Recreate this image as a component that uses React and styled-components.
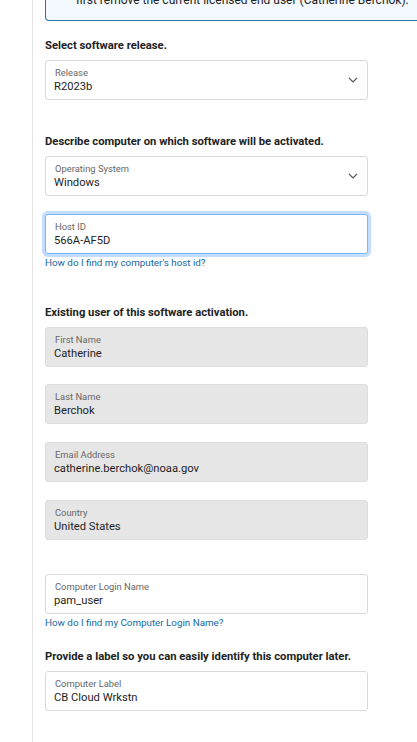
import React from "react";
import styled, { createGlobalStyle } from "styled-components";

const Global = createGlobalStyle`
  html, body { margin: 0; padding: 0; background: #fff; overflow: hidden; }
  body { font-family: Roboto, "Liberation Sans", Arial, sans-serif; color: #222; }
  * { box-sizing: border-box; }
`;

const Page = styled.div`
  display: flex;
  width: 417px;
  height: 742px;
  overflow: hidden;
`;

const Gutter = styled.div`
  flex: 0 0 33px;
  border-right: 1px solid #e6e6e6;
`;

const Main = styled.div`
  flex: 1;
  padding-left: 12px;
  min-width: 0;
`;

const Alert = styled.div`
  width: 400px;
  margin-top: -8px;
  padding: 0 12px 12px 30px;
  background: #f3f9ff;
  border: 1px solid #2a76a0;
  border-top: none;
  border-radius: 0 0 4px 4px;
  font-size: 12px;
  line-height: 16px;
  color: #222;
  white-space: nowrap;
`;

const Heading = styled.h3`
  margin: ${(p) => p.$top}px 0 0;
  font-size: 11.25px;
  font-weight: 700;
  line-height: 16px;
  color: #222;
  white-space: nowrap;
`;

const Field = styled.div`
  position: relative;
  width: 323px;
  height: 40px;
  margin-top: ${(p) => p.$top}px;
  padding: 6px 8px 0 8px;
  border-radius: 3px;
  border: 1px solid ${(p) => (p.$focus ? "#7db5f2" : p.$disabled ? "#dddddd" : "#d9d9d9")};
  background: ${(p) => (p.$disabled ? "#e6e6e6" : "#fff")};
  box-shadow: ${(p) => (p.$focus ? "0 0 0 3px #c2ddff" : "none")};
`;

const Label = styled.div`
  font-size: 9.4px;
  line-height: 12px;
  color: #666;
  padding-left: 1px;
  white-space: nowrap;
`;

const Value = styled.div`
  font-size: 11.2px;
  line-height: 15px;
  color: #1e1e1e;
  white-space: nowrap;
`;

const Chevron = styled.svg`
  position: absolute;
  right: 9px;
  top: 16px;
  width: 10px;
  height: 6px;
`;

const HelpLink = styled.a`
  display: block;
  margin-top: ${(p) => p.$top}px;
  font-size: 9.8px;
  line-height: 12px;
  color: #14689f;
  text-decoration: none;
  white-space: nowrap;
`;

function FormField({ label, value, top, select, disabled, focus }) {
  return (
    <Field $top={top} $disabled={disabled} $focus={focus}>
      <Label>{label}</Label>
      <Value>{value}</Value>
      {select && (
        <Chevron viewBox="0 0 10 6">
          <path d="M1 1 L5 5 L9 1" fill="none" stroke="#555" strokeWidth="1.1" />
        </Chevron>
      )}
    </Field>
  );
}

export default function App() {
  return (
    <>
      <Global />
      <Page>
        <Gutter />
        <Main>
          <Alert>first remove the current licensed end user (Catherine Berchok).</Alert>
          <Heading $top={17}>Select software release.</Heading>
          <FormField top={6} label="Release" value="R2023b" select />
          <Heading $top={34}>Describe computer on which software will be activated.</Heading>
          <FormField top={6} label="Operating System" value="Windows" select />
          <FormField top={18} label="Host ID" value="566A-AF5D" focus />
          <HelpLink $top={3} href="#">How do I find my computer's host id?</HelpLink>
          <Heading $top={36}>Existing user of this software activation.</Heading>
          <FormField top={6} label="First Name" value="Catherine" disabled />
          <FormField top={17} label="Last Name" value="Berchok" disabled />
          <FormField top={18} label="Email Address" value="catherine.berchok@noaa.gov" disabled />
          <FormField top={18} label="Country" value="United States" disabled />
          <FormField top={34} label="Computer Login Name" value="pam_user" />
          <HelpLink $top={3} href="#">How do I find my Computer Login Name?</HelpLink>
          <Heading $top={20}>Provide a label so you can easily identify this computer later.</Heading>
          <FormField top={6} label="Computer Label" value="CB Cloud Wrkstn" />
        </Main>
      </Page>
    </>
  );
}
